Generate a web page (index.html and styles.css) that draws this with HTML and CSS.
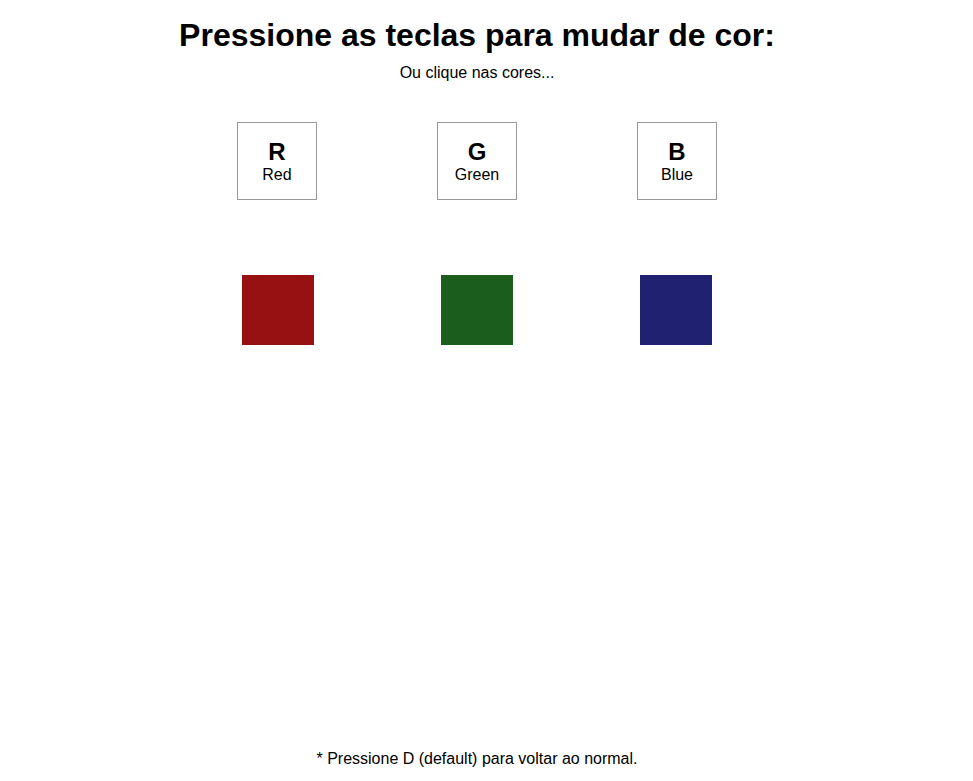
FILE: index.html
```html
<!DOCTYPE html>
<html lang="pt">
<head>
<meta charset="utf-8">
<title>Teclas de cor</title>
<link rel="stylesheet" href="styles.css">
</head>
<body>
<div class="page">
  <h1 class="title">Pressione as teclas para mudar de cor:</h1>
  <p class="subtitle">Ou clique nas cores...</p>
  <div class="keys">
    <div class="key"><span class="key-letter">R</span><span class="key-name">Red</span></div>
    <div class="key"><span class="key-letter">G</span><span class="key-name">Green</span></div>
    <div class="key"><span class="key-letter">B</span><span class="key-name">Blue</span></div>
  </div>
  <div class="swatches">
    <div class="swatch swatch-red"></div>
    <div class="swatch swatch-green"></div>
    <div class="swatch swatch-blue"></div>
  </div>
  <p class="footer">* Pressione D (default) para voltar ao normal.</p>
</div>
</body>
</html>
```
FILE: styles.css
```css
html, body {
  margin: 0;
  padding: 0;
  background: #ffffff;
}
body {
  font-family: "Liberation Sans", Arial, sans-serif;
  color: #000;
}
.page {
  width: 954px;
  min-height: 100vh;
  display: flex;
  flex-direction: column;
  align-items: center;
  box-sizing: border-box;
  padding-bottom: 13px;
}
.title {
  font-size: 32px;
  font-weight: bold;
  margin: 17px 0 0;
}
.subtitle {
  font-size: 16px;
  margin: 10px 0 0;
}
.keys {
  display: flex;
  gap: 120px;
  margin-top: 40px;
}
.key {
  width: 80px;
  height: 78px;
  box-sizing: border-box;
  border: 1px solid #999;
  display: flex;
  flex-direction: column;
  align-items: center;
  justify-content: center;
}
.key-letter {
  font-size: 24px;
  font-weight: bold;
}
.key-name {
  font-size: 16px;
}
.swatches {
  display: flex;
  gap: 127px;
  margin-top: 75px;
}
.swatch {
  width: 72px;
  height: 70px;
}
.swatch-red { background: #971113; }
.swatch-green { background: #1a5d1c; }
.swatch-blue { background: #202171; }
.footer {
  font-size: 16px;
  margin: auto 0 0;
}
```
